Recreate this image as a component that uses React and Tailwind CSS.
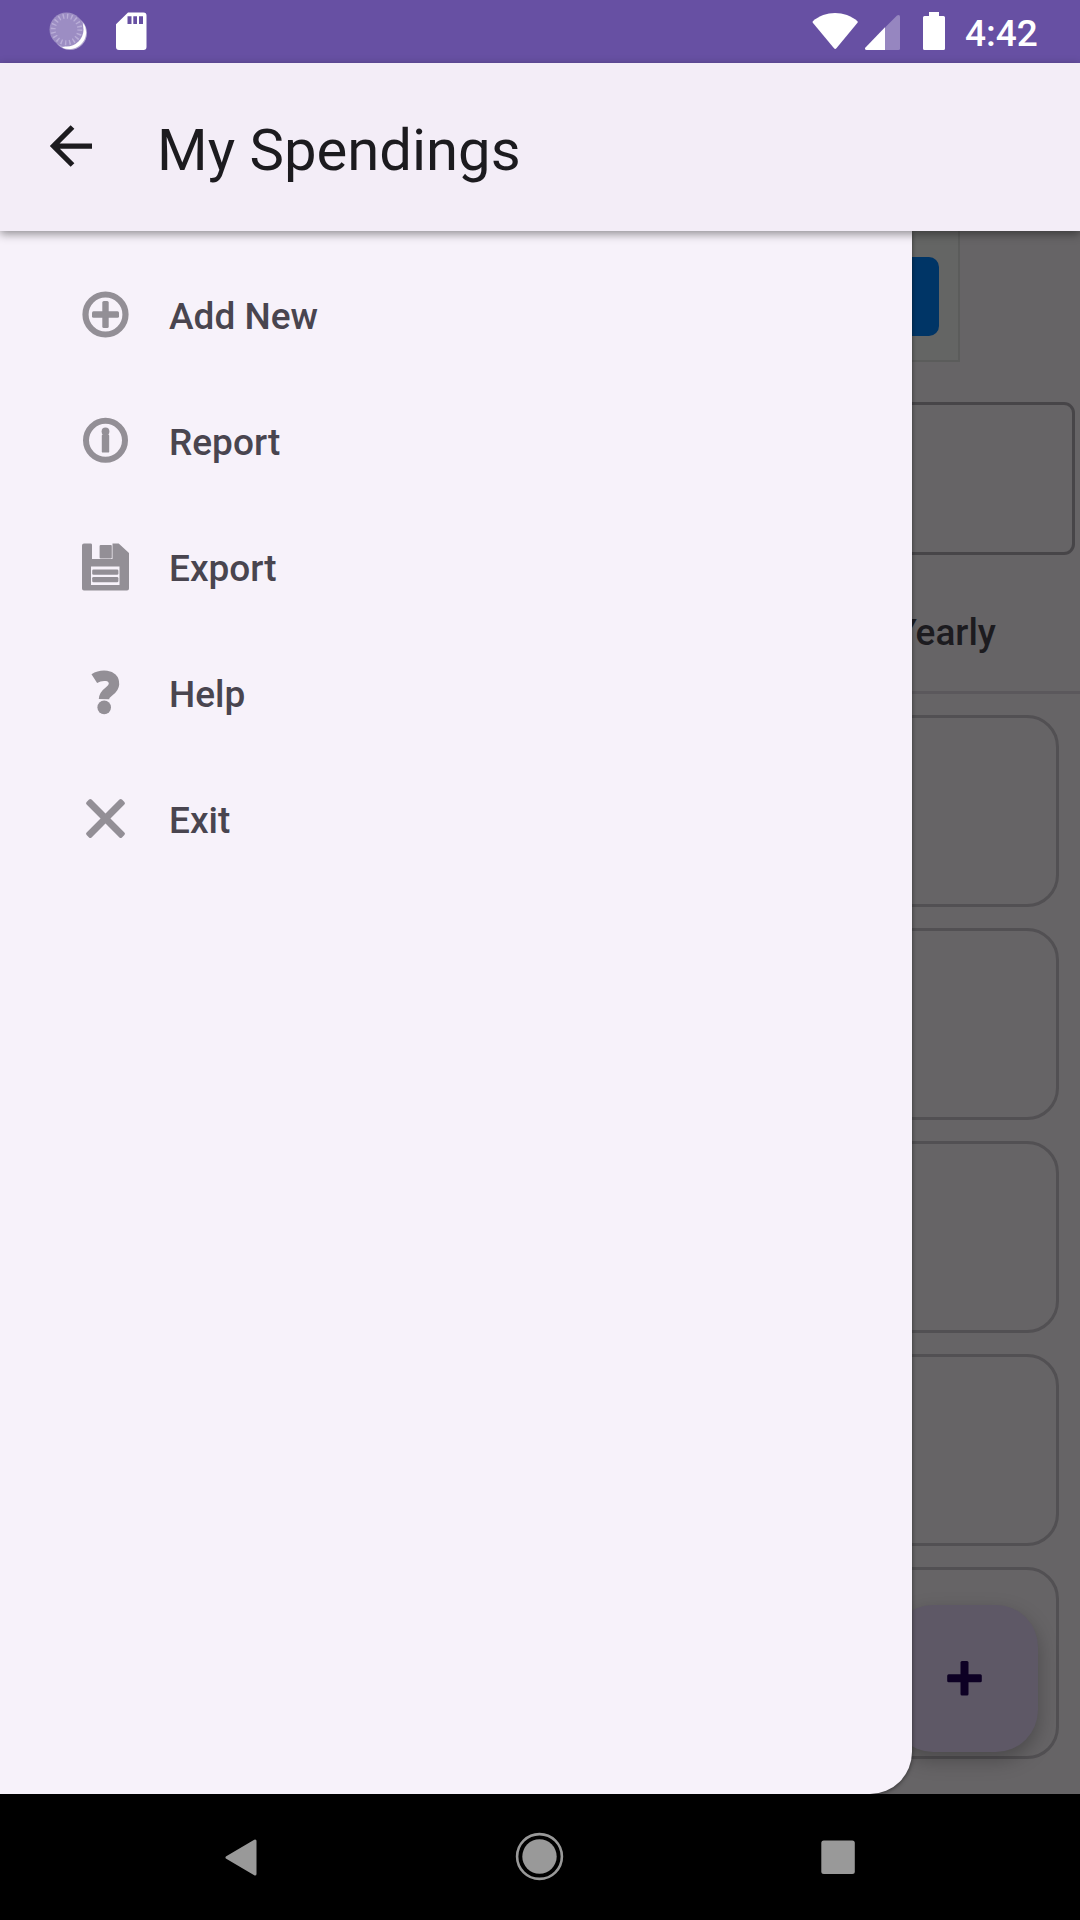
import React from "react";

const gray = "#938f96";

function AddIcon() {
  return (
    <svg className="h-[63px] w-[63px]" viewBox="0 0 63 63" fill={gray}>
      <circle cx="31.500" cy="31.500" r="20" fill="none" stroke={gray} strokeWidth="6.200" />
      <rect x="28.300" y="18" width="6.400" height="27" rx="1.500" />
      <rect x="18" y="28.300" width="27" height="6.400" rx="1.500" />
    </svg>
  );
}

function InfoIcon() {
  return (
    <svg className="h-[63px] w-[63px]" viewBox="0 0 63 63" fill={gray}>
      <circle cx="31.500" cy="31.300" r="19.500" fill="none" stroke={gray} strokeWidth="6" />
      <circle cx="31.500" cy="22.500" r="3.900" />
      <rect x="27.800" y="25.600" width="7.400" height="18" rx="1.200" />
    </svg>
  );
}

function SaveIcon() {
  return (
    <svg className="h-[63px] w-[63px]" viewBox="0 -0.400 63 63" fill={gray}>
      <path
        fillRule="evenodd"
        d="M10 8h6.600q1.400 0 1.400 1.400V23.600h20.500V8h6.200L55 17.600V53q0 2-2 2H10q-2 0-2-2V10q0-2 2-2zM17 31v18.500h28.500V31z"
      />
      <rect x="25.600" y="9.600" width="12.200" height="13.600" rx="1" />
      <rect x="18.200" y="34" width="26.200" height="5.300" rx="1.300" />
      <rect x="18.200" y="41.500" width="26.200" height="5.300" rx="1.300" />
    </svg>
  );
}

function HelpIcon() {
  return (
    <svg className="h-[63px] w-[63px]" viewBox="0 0.400 63 63">
      <path
        d="M20.300 18C26.500 14 40.300 12.800 40 23.500C39.600 31 30.300 30.500 30 38.500"
        fill="none"
        stroke={gray}
        strokeWidth="10.400"
        strokeLinejoin="round"
      />
      <circle cx="30.200" cy="46.800" r="6.800" fill={gray} />
    </svg>
  );
}

function CloseIcon() {
  return (
    <svg className="h-[63px] w-[63px]" viewBox="0 0 63 63" fill={gray}>
      <g transform="rotate(45 31.500 31.500)">
        <rect x="28" y="6.500" width="7" height="50" rx="1.800" />
        <rect x="6.500" y="28" width="50" height="7" rx="1.800" />
      </g>
    </svg>
  );
}

const menu = [
  { label: "Add New", Icon: AddIcon },
  { label: "Report", Icon: InfoIcon },
  { label: "Export", Icon: SaveIcon },
  { label: "Help", Icon: HelpIcon },
  { label: "Exit", Icon: CloseIcon },
];

function StatusBar() {
  return (
    <header className="flex h-[63px] shrink-0 items-center bg-[#6750a3] pl-[46px] pr-[42px]">
      <svg className="h-[63px] w-[44px]" viewBox="46 0 44 63">
        <circle cx="70" cy="33" r="17" fill="#b3a8d1" />
        <path d="M83.500 23A17 17 0 0 1 62 47.500L67 45.500A17 17 0 0 0 82 31z" fill="#fff" />
        <circle cx="66.500" cy="29.500" r="17" fill="#9c8dc3" />
        <circle cx="66.500" cy="29.500" r="13.300" fill="none" stroke="#b9add7" strokeWidth="5" strokeDasharray="1.400 2.779" />
      </svg>
      <svg className="ml-[24px] h-[63px] w-[36px]" viewBox="114 0 36 63">
        <path
          fillRule="evenodd"
          fill="#fff"
          d="M128 12.500h15.500q3 0 3 3V47q0 3-3 3H119q-3 0-3-3V24.300zM127.500 16.300V24h4v-7.700zM133.300 16.300V24h3.700v-7.700zM139 16.300V24h4v-7.700z"
        />
      </svg>
      <div className="flex-1" />
      <svg className="h-[63px] w-[138px]" viewBox="810 0 138 63" fill="#fff">
        <path d="M812.800 21.300C825 10.300 845 10.300 857.500 21.300Q858 22 857.500 22.800L836.400 48.200Q835.200 49.600 834 48.200L812.800 22.800Q812.300 22 812.800 21.300z" />
        <path d="M885 27.500L897 15.600Q900 14 900 17V48.500Q900 50 898.500 50H885z" fill="#9686c0" />
        <path d="M885 27.300V50H866.500Q864.500 50 865 48z" />
        <path d="M929 12h10v4h4.500q1.500 0 1.500 1.500v31q0 1.500-1.500 1.500h-19q-1.500 0-1.500-1.500v-31q0-1.500 1.500-1.500h4.500z" />
      </svg>
      <span className="ml-[17px] w-[73px] whitespace-nowrap pt-[3px] text-[37px] font-medium leading-none text-white">4:42</span>
    </header>
  );
}

function AppBar() {
  return (
    <div className="relative z-20 flex h-[168px] shrink-0 items-center bg-[#f3edf7] pl-[42px] shadow-[0_3px_9px_rgba(0,0,0,0.42)]">
      <svg className="h-[63px] w-[63px]" viewBox="42 116 63 63" fill="none" stroke="#1c1b1f" strokeWidth="5.250">
        <path d="M72.500 127L53.500 146L72.500 165M53.500 146H92" />
      </svg>
      <h1 className="ml-[52px] pt-[5px] text-[58px] font-normal leading-none text-[#1c1b1f]">My Spendings</h1>
    </div>
  );
}

function SpendingsPage() {
  return (
    <main className="flex h-full flex-col overflow-hidden bg-[#666466]">
      <section className="mx-auto flex h-[131px] w-[840px] shrink-0 items-center justify-end border-2 border-t-0 border-[#5b5c5b] bg-[#646564] pr-[19px] pt-[2px]">
        <div className="h-[79px] w-[250px] rounded-[10px] bg-[#003566]" />
      </section>
      <div className="mx-[5px] mt-[40px] h-[153px] shrink-0 rounded-[11px] border-[3px] border-[#474548]" />
      <nav className="flex h-[139px] shrink-0 items-center justify-end border-b-[3px] border-[#5b585c] pr-[84px]">
        <span className="pt-[18px] text-[37px] font-medium leading-none text-[#1c1b1f]">Yearly</span>
      </nav>
      <ul className="flex flex-col gap-[21px] px-[21px] pt-[21px]">
        {[0, 1, 2, 3, 4].map((i) => (
          <li key={i} className="h-[192px] shrink-0 rounded-[32px] border-[3px] border-[#525053]" />
        ))}
      </ul>
    </main>
  );
}

function AddButton() {
  return (
    <button className="absolute bottom-[42px] right-[42px] flex h-[147px] w-[147px] items-center justify-center rounded-[42px] bg-[#5e5866] shadow-[0_8px_20px_rgba(0,0,0,0.27)]">
      <svg className="h-[37px] w-[37px]" viewBox="0 0 37 37" fill="#0d0024">
        <rect x="14.500" y="1" width="8" height="34.600" rx="1.500" />
        <rect x="1.200" y="14.300" width="34.600" height="8" rx="1.500" />
      </svg>
    </button>
  );
}

function Drawer() {
  return (
    <aside className="absolute inset-y-0 left-0 w-[912px] rounded-br-[42px] bg-[#f7f2fa] pt-[21px] shadow-[0_1px_4px_rgba(0,0,0,0.5)]">
      {menu.map(({ label, Icon }) => (
        <a key={label} className="flex h-[126px] items-center pl-[74px]">
          <div className="pb-[2px]">
            <Icon />
          </div>
          <span className="ml-[32px] pt-[3px] text-[37px] font-medium leading-none text-[#49454f]">{label}</span>
        </a>
      ))}
    </aside>
  );
}

function NavigationBar() {
  return (
    <footer className="flex h-[126px] shrink-0 items-center justify-between bg-black px-[210px]">
      <svg className="h-[63px] w-[63px]" viewBox="210 1825 63 63" fill="#999" stroke="#999" strokeWidth="3" strokeLinejoin="round">
        <path d="M227 1856.500L255 1840V1873z" />
      </svg>
      <svg className="h-[63px] w-[63px]" viewBox="0 0 63 63">
        <circle cx="30.500" cy="30.500" r="22.400" fill="none" stroke="#999" strokeWidth="2.600" />
        <circle cx="30.500" cy="30.500" r="17.200" fill="#999" />
      </svg>
      <svg className="h-[63px] w-[63px]" viewBox="807 1825 63 63">
        <rect x="821.300" y="1839.500" width="33.500" height="33.500" rx="2.500" fill="#999" />
      </svg>
    </footer>
  );
}

export default function App() {
  return (
    <div className="flex h-[1920px] w-[1080px] flex-col overflow-hidden bg-black font-['Roboto','Noto_Sans',sans-serif]">
      <StatusBar />
      <AppBar />
      <div className="relative h-[1563px] shrink-0 overflow-hidden">
        <SpendingsPage />
        <AddButton />
        <Drawer />
      </div>
      <NavigationBar />
    </div>
  );
}
